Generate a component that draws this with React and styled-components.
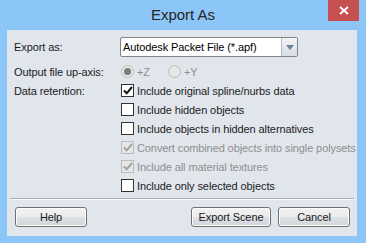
import React from "react";
import styled, { createGlobalStyle } from "styled-components";

const GlobalStyle = createGlobalStyle`
  html, body {
    margin: 0;
    padding: 0;
    background: #8cc5f7;
  }
  * { box-sizing: border-box; }
`;

const Window = styled.div`
  width: 366px;
  height: 243px;
  background: #8cc5f7;
  display: flex;
  flex-direction: column;
  font-family: "Liberation Sans", Arial, sans-serif;
  font-size: 11px;
  letter-spacing: -0.1px;
  color: #1b1b1b;
`;

const TitleBar = styled.div`
  position: relative;
  height: 30px;
  display: flex;
  align-items: center;
  justify-content: center;
  font-size: 15px;
  letter-spacing: 0;
  color: #262626;
  padding-bottom: 1px;
`;

const CloseButton = styled.div`
  position: absolute;
  top: 0;
  right: 7px;
  width: 31px;
  height: 21px;
  background: #c75050;
  display: flex;
  align-items: center;
  justify-content: center;
`;

const Panel = styled.div`
  flex: 1;
  margin: 0 9px 7px 7px;
  background: #e1e6ed;
  display: flex;
  flex-direction: column;
  padding: 7px 7px 9px 7px;
  overflow: hidden;
`;

const Form = styled.div`
  display: grid;
  grid-template-columns: 106px 1fr;
  grid-template-rows: 25px;
  grid-auto-rows: 19px;
`;

const Label = styled.div`
  grid-column: 1;
  display: flex;
  align-items: center;
  white-space: nowrap;
`;

const Field = styled.div`
  grid-column: 2;
  display: flex;
  align-items: center;
  gap: ${(p) => p.$gap || 0}px;
  white-space: nowrap;
`;

const ComboLabel = styled(Label)`
  height: 20px;
  align-self: start;
`;

const Combo = styled.div`
  grid-column: 2;
  align-self: start;
  width: 178px;
  height: 20px;
  display: flex;
  border: 1px solid #848484;
  border-radius: 2px;
  background: #fff;
  overflow: hidden;
`;

const ComboText = styled.div`
  flex: 1;
  display: flex;
  align-items: center;
  padding-left: 2px;
  color: #000;
`;

const ComboArrow = styled.div`
  width: 16px;
  border-left: 1px solid #b4b8bd;
  background: linear-gradient(#f2f4f6, #d7dde4);
  display: flex;
  align-items: center;
  justify-content: center;
`;

const Option = styled.div`
  display: flex;
  align-items: center;
  gap: 3px;
  color: ${(p) => (p.$disabled ? "#8e8e8e" : "#1b1b1b")};
`;

const Radio = styled.span`
  width: 13px;
  height: 13px;
  border-radius: 50%;
  border: 1px solid #bcbcbc;
  background: #e6e6e6;
  display: flex;
  align-items: center;
  justify-content: center;
  margin-left: 1px;
  &::after {
    content: "";
    width: 7px;
    height: 7px;
    border-radius: 50%;
    background: ${(p) => (p.$on ? "#7b7b7b" : "transparent")};
  }
`;

const Box = styled.span`
  flex: none;
  width: 13px;
  height: 13px;
  border: 1px solid ${(p) => (p.$disabled ? "#bcbcbc" : "#333")};
  background: ${(p) => (p.$disabled ? "#e6e6e6" : "#fff")};
  display: flex;
  align-items: center;
  justify-content: center;
  margin-left: 1px;
`;

const Separator = styled.div`
  margin: 3px -4px 0 -4px;
  height: 2px;
  border-top: 1px solid #a6abb1;
  border-bottom: 1px solid #f7f9fb;
`;

const Buttons = styled.div`
  margin-top: 7px;
  display: flex;
  align-items: center;
  padding-left: 1px;
  gap: 7px;
`;

const Spacer = styled.div`
  flex: 1;
`;

const Button = styled.div`
  width: ${(p) => p.$w}px;
  height: 20px;
  border: 1px solid #707070;
  border-radius: 3px;
  background: linear-gradient(#f2f2f2 0%, #ebebeb 50%, #dde0e4 51%, #d2d6db 100%);
  display: flex;
  align-items: center;
  justify-content: center;
  color: #1b1b1b;
  box-shadow: inset 0 0 0 1px #fcfcfc;
`;

const Check = ({ disabled }) => (
  <svg width="10" height="9" viewBox="0 0 10 9">
    <path
      d="M1 4.5 L3.7 7.3 L9 1"
      fill="none"
      stroke={disabled ? "#a3a3a3" : "#111"}
      strokeWidth="2"
    />
  </svg>
);

const CheckOption = ({ checked, disabled, children }) => (
  <Field>
    <Option $disabled={disabled}>
      <Box $disabled={disabled}>{checked && <Check disabled={disabled} />}</Box>
      {children}
    </Option>
  </Field>
);

const retention = [
  { text: "Include original spline/nurbs data", checked: true },
  { text: "Include hidden objects" },
  { text: "Include objects in hidden alternatives" },
  { text: "Convert combined objects into single polysets", checked: true, disabled: true },
  { text: "Include all material textures", checked: true, disabled: true },
  { text: "Include only selected objects" },
];

export default function App() {
  return (
    <>
      <GlobalStyle />
      <Window>
        <TitleBar>
          Export As
          <CloseButton>
            <svg width="10" height="9" viewBox="0 0 10 9">
              <path d="M1 1 L9 8 M9 1 L1 8" stroke="#fff" strokeWidth="2" />
            </svg>
          </CloseButton>
        </TitleBar>
        <Panel>
          <Form>
            <ComboLabel>Export as:</ComboLabel>
            <Combo>
              <ComboText>Autodesk Packet File (*.apf)</ComboText>
              <ComboArrow>
                <svg width="8" height="5" viewBox="0 0 8 5">
                  <path d="M0 0 H8 L4 5 Z" fill="#6d7f93" />
                </svg>
              </ComboArrow>
            </Combo>
            <Label>Output file up-axis:</Label>
            <Field $gap={17}>
              <Option $disabled>
                <Radio $on />
                +Z
              </Option>
              <Option $disabled>
                <Radio />
                +Y
              </Option>
            </Field>
            <Label>Data retention:</Label>
            {retention.map((r, i) => (
              <CheckOption key={i} checked={r.checked} disabled={r.disabled}>
                {r.text}
              </CheckOption>
            ))}
          </Form>
          <Separator />
          <Buttons>
            <Button $w={72}>Help</Button>
            <Spacer />
            <Button $w={80}>Export Scene</Button>
            <Button $w={72}>Cancel</Button>
          </Buttons>
        </Panel>
      </Window>
    </>
  );
}
